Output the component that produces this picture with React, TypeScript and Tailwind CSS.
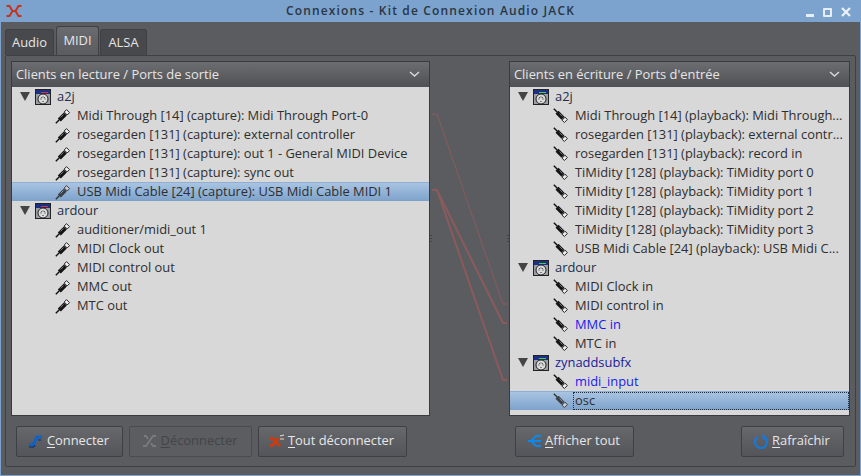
import React from 'react';

// Barre de titre, onglets, deux listes de ports et boutons
const FONT = "font-['Open_Sans','Noto_Sans',sans-serif]";

interface Port {
  label: string;
  blue?: boolean;
  selected?: boolean;
  focus?: boolean;
}

interface Client {
  name: string;
  blue?: boolean;
  ports: Port[];
}

const readable: Client[] = [
  {
    name: 'a2j',
    ports: [
      { label: 'Midi Through [14] (capture): Midi Through Port-0' },
      { label: 'rosegarden [131] (capture): external controller' },
      { label: 'rosegarden [131] (capture): out 1 - General MIDI Device' },
      { label: 'rosegarden [131] (capture): sync out' },
      { label: 'USB Midi Cable [24] (capture): USB Midi Cable MIDI 1', selected: true },
    ],
  },
  {
    name: 'ardour',
    ports: [
      { label: 'auditioner/midi_out 1' },
      { label: 'MIDI Clock out' },
      { label: 'MIDI control out' },
      { label: 'MMC out' },
      { label: 'MTC out' },
    ],
  },
];

const writable: Client[] = [
  {
    name: 'a2j',
    ports: [
      { label: 'Midi Through [14] (playback): Midi Through...' },
      { label: 'rosegarden [131] (playback): external contr...' },
      { label: 'rosegarden [131] (playback): record in' },
      { label: 'TiMidity [128] (playback): TiMidity port 0' },
      { label: 'TiMidity [128] (playback): TiMidity port 1' },
      { label: 'TiMidity [128] (playback): TiMidity port 2' },
      { label: 'TiMidity [128] (playback): TiMidity port 3' },
      { label: 'USB Midi Cable [24] (playback): USB Midi C...' },
    ],
  },
  {
    name: 'ardour',
    ports: [
      { label: 'MIDI Clock in' },
      { label: 'MIDI control in' },
      { label: 'MMC in', blue: true },
      { label: 'MTC in' },
    ],
  },
  {
    name: 'zynaddsubfx',
    blue: true,
    ports: [
      { label: 'midi_input', blue: true },
      { label: 'osc', selected: true, focus: true },
    ],
  },
];

const ClientIcon = ({ input }: { input?: boolean }) => (
  <svg width="16" height="16" viewBox="0 0 16 16" className="shrink-0">
    <rect x="0" y="0" width="16" height="16" fill="#222" />
    <rect x="1" y="1" width="14" height="14" fill="#9a9da6" />
    <rect x="1" y="1" width="14" height="4" fill="#1c2f80" />
    <rect x="6" y="3" width="7" height="1" fill={input ? '#40d040' : '#e03030'} />
    <circle cx="8" cy="10" r="5" fill="#dcdcdc" stroke="#222" strokeWidth="1" />
    <path d="M5.5 10h1M9.5 10h1M8 7.5v1M6.3 8.3l.7.7M9.7 8.3l-.7.7M8 12v1" stroke="#222" strokeWidth="1" />
  </svg>
);

// Fiche jack : sortie vers le haut à droite, entrée vers le bas à droite
const PlugIcon = ({ input, dim }: { input?: boolean; dim?: boolean }) => (
  <svg width="16" height="16" viewBox="0 0 16 16" className="shrink-0">
    <g transform={input ? 'rotate(90 8 8)' : undefined}>
      <path d="M0.8 15.2l3.5-3.5" stroke={dim ? '#333' : '#111'} strokeWidth="1.4" />
      <path d="M2.8 10.5L8.8 4.5l3 3-6 6z" fill={dim ? '#3a4048' : '#141414'} />
      <path d="M5.5 9.5l3-3" stroke={dim ? '#8a92a0' : '#777'} strokeWidth="1" />
      <path d="M9.2 4L11.5 1.6l3 3L12.2 7z" fill={dim ? '#c8ccd4' : '#eeeeee'} stroke={dim ? '#333' : '#111'} strokeWidth="0.9" />
    </g>
  </svg>
);

const Arrow = () => (
  <span className="w-0 h-0 border-l-[5px] border-r-[5px] border-t-[9px] border-l-transparent border-r-transparent border-t-[#444] shrink-0" />
);

const PortRow = ({ port, input }: { port: Port; input?: boolean }) => (
  <div
    className={`h-[19px] flex items-center pl-[43px] gap-[4px] ${
      port.selected ? 'bg-gradient-to-b from-[#a9c4e2] to-[#7da2cb] border-t border-[#8fb0d4]' : ''
    }`}
  >
    <PlugIcon input={input} dim={port.selected} />
    <span
      className={`flex-1 h-full flex items-center pl-[2px] whitespace-nowrap overflow-hidden ${
        port.blue ? 'text-[#1a1aee]' : 'text-[#2e2e2e]'
      } ${port.focus ? 'outline-1 outline-dotted outline-[#1c2c40] -outline-offset-1' : ''}`}
    >
      {port.label}
    </span>
  </div>
);

const PortPanel = ({
  title,
  clients,
  input,
  width,
}: {
  title: string;
  clients: Client[];
  input?: boolean;
  width: string;
}) => (
  <div className={`${width} shrink-0 flex flex-col border border-[#3a3b3d] min-h-0`}>
    <div className="h-[25px] shrink-0 flex items-center justify-between pl-[4px] pr-[9px] bg-gradient-to-b from-[#6c6d70] to-[#505155] text-[#e6e6e6]">
      <span>{title}</span>
      <svg width="11" height="7" viewBox="0 0 11 7">
        <path d="M1 1l4.5 4L10 1" fill="none" stroke="#d8d8d8" strokeWidth="1.5" />
      </svg>
    </div>
    <div className="flex-1 bg-[#d8d8d8] overflow-hidden">
      {clients.map((client) => (
        <div key={client.name}>
          <div className="h-[19px] flex items-center pl-[8px]">
            <Arrow />
            <span className="ml-[5px]"><ClientIcon input={input} /></span>
            <span className={`ml-[6px] ${client.blue ? 'text-[#1a1a9a]' : 'text-[#22304a]'}`}>{client.name}</span>
          </div>
          {client.ports.map((port) => (
            <PortRow key={port.label} port={port} input={input} />
          ))}
        </div>
      ))}
    </div>
  </div>
);

const ActionButton = ({
  icon,
  letter,
  rest,
  width,
  disabled,
}: {
  icon: React.ReactNode;
  letter: string;
  rest: string;
  width: string;
  disabled?: boolean;
}) => (
  <button
    className={`h-[31px] flex items-center justify-center gap-[3px] pr-[2px] rounded-[2px] border ${width} ${
      disabled
        ? 'border-[#4a4b4e] bg-[#5c5d61] text-[#434447]'
        : 'border-[#3f4043] bg-gradient-to-b from-[#67686c] to-[#54555a] text-[#e6e6e6]'
    }`}
  >
    {icon}
    <span>
      <span className="underline underline-offset-2">{letter}</span>
      {rest}
    </span>
  </button>
);

const ConnectIcon = () => (
  <svg width="16" height="14" viewBox="0 0 16 14">
    <path d="M1 11h4l4-8h5" fill="none" stroke="#0f62c8" strokeWidth="3" />
    <path d="M1 13h5l1-2M10 6h3" fill="none" stroke="#0a2a60" strokeWidth="1" />
  </svg>
);

const DisconnectIcon = () => (
  <svg width="16" height="14" viewBox="0 0 16 14">
    <path d="M1 12h3L11 2h3M2 2h2l2 3M9 9l2 3h3" fill="none" stroke="#7a7b7e" strokeWidth="1.8" />
  </svg>
);

const DisconnectAllIcon = () => (
  <svg width="16" height="14" viewBox="0 0 16 14">
    <path d="M1 11.5h2.5L9.5 4M1 4.5h2.5L9.5 11h2" fill="none" stroke="#d23a0c" strokeWidth="2.6" />
    <path d="M11 2l4-1M11 5h4" stroke="#e8d8c8" strokeWidth="1.1" />
  </svg>
);

const ShowAllIcon = () => (
  <svg width="15" height="14" viewBox="0 0 15 14">
    <path d="M14 2H9L4 7l5 5h5M1 7h13" fill="none" stroke="#1088e8" strokeWidth="2" />
  </svg>
);

const RefreshIcon = () => (
  <svg width="16" height="16" viewBox="0 0 16 16">
    <path d="M5 3.8a6 6 0 1 0 6 0" fill="none" stroke="#1878d8" strokeWidth="2.2" />
    <path d="M9.5 0.5v6h5.5z" fill="#1878d8" />
  </svg>
);

const App: React.FC = () => {
  return (
    <div className={`w-[861px] h-[476px] flex flex-col bg-[#5b5c60] text-[12.9px] overflow-hidden ${FONT}`}>
      <div className="h-[22px] shrink-0 relative flex items-center justify-center bg-[#7ba3ce] text-[#2a3542] font-semibold text-[12px] tracking-[1.15px]">
        <svg width="16" height="12" viewBox="0 0 16 12" className="absolute left-[6px] top-[5px]">
          <path d="M0.5 1h3l3 5-3 5h-3M6 6h4M9.5 6l3-5h3M9.5 6l3 5h3" fill="none" stroke="#c8321a" strokeWidth="2" />
        </svg>
        Connexions - Kit de Connexion Audio JACK
        <div className="absolute right-[10px] top-[7px] flex items-center gap-[9px]">
          <span className="w-[8px] h-[3px] mt-[7px] bg-[#e8eef6]" />
          <span className="w-[9px] h-[9px] border-2 border-[#e8eef6] rounded-[1px]" />
          <svg width="10" height="10" viewBox="0 0 10 10">
            <path d="M1 1l8 8M9 1l-8 8" stroke="#eef2f8" strokeWidth="2.2" />
          </svg>
        </div>
      </div>

      <div className="flex-1 flex flex-col px-[1px] pb-[1px] border-x border-b border-[#7ba3ce] min-h-0">
        <div className="h-[33px] shrink-0 flex items-end pl-[3px] gap-[1px] text-[#e6e6e6]">
          <div className="h-[26px] w-[49px] mr-[1px] flex items-center justify-center rounded-t-[3px] border border-b-0 border-[#3f4043] bg-[#48494c]">Audio</div>
          <div className="h-[29px] w-[43px] flex items-center justify-center rounded-t-[3px] border border-b-0 border-[#3f4043] bg-gradient-to-b from-[#6a6b6e] to-[#5b5c60]">MIDI</div>
          <div className="h-[26px] w-[47px] flex items-center justify-center rounded-t-[3px] border border-b-0 border-[#3f4043] bg-[#48494c]">ALSA</div>
        </div>
        <div className="flex-1 flex flex-col mx-[3px] mb-[7px] border border-[#3f4043] rounded-[2px] px-[5px] pt-[5px] min-h-0">
          <div className="flex-1 flex min-h-0">
            <PortPanel title="Clients en lecture / Ports de sortie" clients={readable} width="w-[419px]" />
            <svg width="79" height="354" viewBox="0 0 79 354" className="shrink-0 block">
              <g fill="none" stroke="#8b5a5c">
                <path d="M2 53h5L73 243h4" strokeWidth="1" />
                <path d="M2 129h5L73 262h4" strokeWidth="2" />
                <path d="M2 129h5L73 319h4" strokeWidth="2" />
              </g>
              <path d="M0 174.5h2M0 177.5h2M0 180.5h2M77 174.5h2M77 177.5h2M77 180.5h2" stroke="#444" />
            </svg>
            <PortPanel title="Clients en écriture / Ports d'entrée" clients={writable} input width="w-[341px]" />
          </div>
          <div className="h-[50px] shrink-0 flex items-center justify-between pl-[5px] pr-[6px]">
            <div className="flex gap-[6px]">
              <ActionButton icon={<ConnectIcon />} letter="C" rest="onnecter" width="w-[107px]" />
              <ActionButton icon={<DisconnectIcon />} letter="D" rest="éconnecter" width="w-[123px]" disabled />
              <ActionButton icon={<DisconnectAllIcon />} letter="T" rest="out déconnecter" width="w-[149px]" />
            </div>
            <div className="flex gap-[107px]">
              <ActionButton icon={<ShowAllIcon />} letter="A" rest="fficher tout" width="w-[119px]" />
              <ActionButton icon={<RefreshIcon />} letter="R" rest="afraîchir" width="w-[103px]" />
            </div>
          </div>
        </div>
      </div>
    </div>
  );
};

export default App;
